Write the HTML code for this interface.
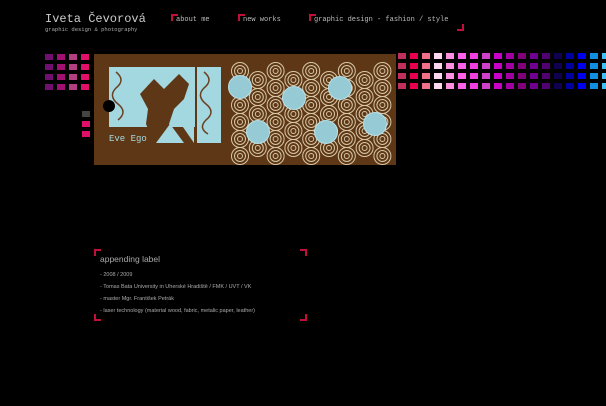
<!DOCTYPE html><html><head><meta charset="utf-8"><style>
body{margin:0;width:606px;height:406px;background:#000;overflow:hidden;position:relative;font-family:"Liberation Mono",monospace}
.a{position:absolute}
.sq{position:absolute;width:8px;height:6px}
.nav{position:absolute;top:16px;font-size:7px;color:#bbb}
.c{position:absolute;width:5px;height:5px;border-color:#c0103a;border-style:solid;border-width:0}
.t{position:absolute;left:100px;font-family:"Liberation Sans",sans-serif;font-size:5.5px;color:#aaa}
</style></head><body>
<div class="a" style="left:45px;top:12px;font-size:12px;color:#ccc;font-family:'Liberation Mono',monospace">Iveta Čevorová</div>
<div class="a" style="left:45px;top:26px;font-size:5.5px;color:#aaa">graphic design &amp; photography</div>
<div class="c" style="left:171px;top:14px;border-top-width:2px;border-left-width:2px"></div><div class="nav" style="left:176px">about me</div>
<div class="c" style="left:238px;top:14px;border-top-width:2px;border-left-width:2px"></div><div class="nav" style="left:243px">new works</div>
<div class="c" style="left:309px;top:14px;border-top-width:2px;border-left-width:2px"></div><div class="nav" style="left:314px">graphic design - fashion / style</div>
<div class="c" style="left:457px;top:24px;border-bottom-width:2px;border-right-width:2px"></div>
<div id="g"></div>
<svg class="a" style="left:94px;top:54px" width="302" height="111">
<rect width="302" height="111" fill="#5e3816"/>
<rect x="15" y="13" width="86" height="60" fill="#a4d8e0"/>
<rect x="103" y="13" width="24" height="76" fill="#a4d8e0"/>
<path d="M46 40 L60 25 L70 35 L85 20 L95 30 L90 45 L80 55 L75 70 L85 89 L60 89 L52 70 L54 55 Z" fill="#5e3816"/>
<path d="M80 60 L100 89 L100 60 Z M62 89 L90 89 L76 70 Z" fill="#a4d8e0"/>
<g fill="none" stroke="#6a4020" stroke-width="1.5"><path d="M22 18 q10 8 0 16 q-8 8 2 16 q10 8 0 16"/><path d="M110 18 q10 8 0 16 q-8 8 2 16 q10 8 0 16 q-8 8 2 14"/></g>
<circle cx="15" cy="52" r="6" fill="#000"/>
<text x="15" y="87" font-family="Liberation Mono,monospace" font-size="9" fill="#a4d8e0">Eve Ego</text>
<g id="rings" fill="none" stroke="#d8c8a8" stroke-width="1"></g>
<g fill="#96cad4" stroke="#b8e0e8" stroke-width="1">
<circle cx="146" cy="33" r="11.5"/><circle cx="200" cy="44" r="11.5"/><circle cx="246" cy="34" r="11.5"/><circle cx="164" cy="78" r="11.5"/><circle cx="232" cy="78" r="11.5"/><circle cx="281" cy="70" r="11.5"/></g>
</svg>
<div class="sq" style="left:82px;top:111px;background:#444"></div>
<div class="sq" style="left:82px;top:121px;background:#e0106a"></div>
<div class="sq" style="left:82px;top:131px;background:#e0106a"></div>
<div class="c" style="left:94px;top:249px;border-top-width:2px;border-left-width:2px"></div>
<div class="c" style="left:300px;top:249px;border-top-width:2px;border-right-width:2px"></div>
<div class="c" style="left:94px;top:314px;border-bottom-width:2px;border-left-width:2px"></div>
<div class="c" style="left:300px;top:314px;border-bottom-width:2px;border-right-width:2px"></div>
<div class="a" style="left:100px;top:254px;font-family:'Liberation Sans',sans-serif;font-size:8.5px;color:#aaa">appending label</div>
<div class="t" style="top:272px">- 2008 / 2009</div>
<div class="t" style="top:284px">- Tomas Bata University in Uherské Hradiště / FMK / UVT / VK</div>
<div class="t" style="top:296px">- master Mgr. František Petrák</div>
<div class="t" style="top:308px">- laser technology (material wood, fabric, metalic paper, leather)</div>
<script>
var g=document.getElementById('g'),h='';
var L=['#701070','#a01070','#b04080','#e0106a'];
for(var r=0;r<4;r++)for(var c=0;c<4;c++)h+='<div class="sq" style="left:'+(45+c*12)+'px;top:'+(54+r*10)+'px;background:'+L[c]+'"></div>';
var R=['#c0305a','#e8004e','#f07088','#ffd8f0','#ff90e0','#ff60e8','#f040e0','#d040c8','#c800c8','#a000a0','#800078','#700090','#500070','#100050','#0000a0','#0000f0','#1090e0','#40c0f0'];
for(var r=0;r<4;r++)for(var c=0;c<18;c++)h+='<div class="sq" style="left:'+(398+c*12)+'px;top:'+(53+r*10)+'px;background:'+R[c]+'"></div>';
g.innerHTML=h;
var s='';
for(var c=0;c<9;c++)for(var r=0;r<7;r++){var x=146+c*17.8,y=(c%2?26:17)+r*17;if(y>104)continue;
s+='<circle cx="'+x+'" cy="'+y+'" r="8.5"/><circle cx="'+x+'" cy="'+y+'" r="5.5"/><circle cx="'+x+'" cy="'+y+'" r="2.5"/>';}
document.getElementById('rings').innerHTML=s;
</script>
</body></html>
